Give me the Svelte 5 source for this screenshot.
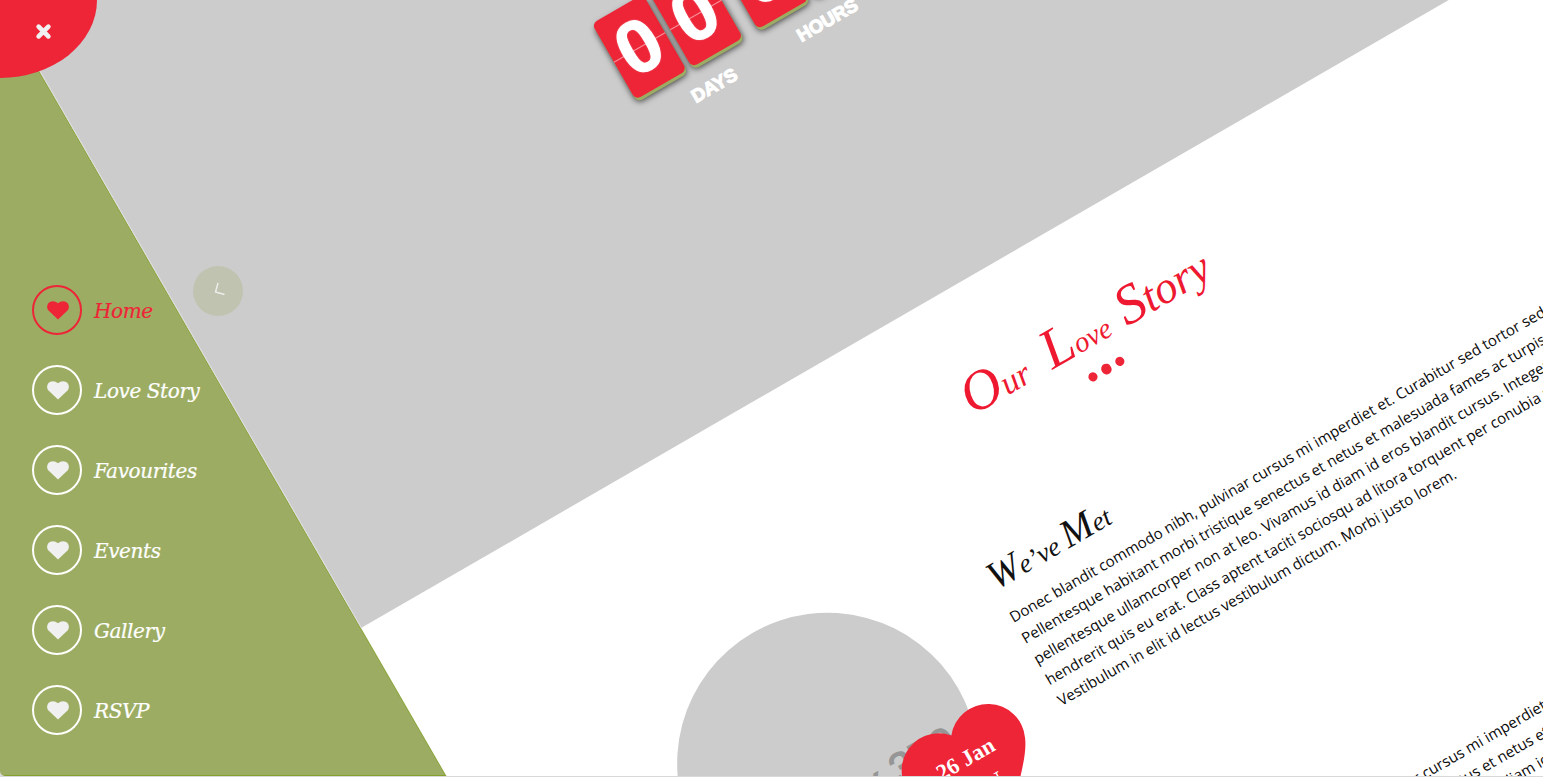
<script>
  const menu = ['Home', 'Love Story', 'Favourites', 'Events', 'Gallery', 'RSVP'];
  const units = [
    { label: 'DAYS', digits: ['0', '0'] },
    { label: 'HOURS', digits: ['0', '0'] }
  ];
  const story = [
    'Donec blandit commodo nibh, pulvinar cursus mi imperdiet et. Curabitur sed tortor sed',
    'Pellentesque habitant morbi tristique senectus et netus et malesuada fames ac turpis',
    'pellentesque ullamcorper non at leo. Vivamus id diam id eros blandit cursus. Integer',
    'hendrerit quis eu erat. Class aptent taciti sociosqu ad litora torquent per conubia nostra',
    'Vestibulum in elit id lectus vestibulum dictum. Morbi justo lorem.'
  ];
</script>

<div class="window">
  <nav>
    {#each menu as item, i}
      <a class:active={i === 0} href="#{item}">
        <span class="ring">
          <svg viewBox="0 0 22 19" width="22" height="19"><path d="M11 18.6 1.5 9.4C-.3 7.500-.3 4.200 1.300 2.200 3.500-.5 8.100-.5 11 2.200 13.900-.5 18.500-.5 20.700 2.200c1.600 2 1.600 5.300-.2 7.200Z" fill="currentColor" /></svg>
        </span>
        <span class="name">{item}</span>
      </a>
    {/each}
  </nav>

  <div class="page">
    <header>
      <div class="clock">
        {#each units as unit}
          <div class="unit">
            <div class="cards">
              {#each unit.digits as d}<div class="card">{d}</div>{/each}
            </div>
            <div class="label">{unit.label}</div>
          </div>
        {/each}
      </div>
    </header>
    <main>
      <h2><span class="our">Our</span><span class="love">Love</span><span class="story">Story</span></h2>
      <div class="dots"><i></i><i class="big"></i><i></i></div>
      {#each [0, 1] as n}
        <article>
          <div class="photo">
            <div class="disc"><span>370 x 370</span></div>
            <div class="date">
              <svg viewBox="0 0 136 136" width="133" height="134"><path d="M68 14A38 38 0 0 1 132 54C124 73 100 92 68 130 36 92 12 73 4.300 54A38 38 0 0 1 68 14Z" fill="#ee2437" /></svg>
              <div class="when">26 Jan<br />SUN</div>
            </div>
          </div>
          <div class="text">
            <h3><span>We’ve</span> <span>Met</span></h3>
            {#each story as line}<p>{line}</p>{/each}
          </div>
        </article>
      {/each}
    </main>
  </div>

  <button class="prev" aria-label="Previous">
    <svg viewBox="0 0 50 50" width="50" height="50"><path d="M25 17 22.500 26 31.500 28.500" fill="none" stroke="#eee" stroke-width="1.400" /></svg>
  </button>
  <button class="close" aria-label="Close">
    <svg viewBox="0 0 14 14" width="17" height="17"><path d="M3 3 11 11M11 3 3 11" stroke="#f1f1f1" stroke-width="3.900" stroke-linecap="round" /></svg>
  </button>
</div>

<style>
  :global(body) { margin: 0; background: #d9d9d9; overflow: hidden; }
  .window {
    position: relative;
    width: 1543px;
    height: 776px;
    overflow: hidden;
    background: linear-gradient(to top, #86a02c 1px, #9cad63 1px);
    border-bottom-left-radius: 5px;
  }
  nav {
    display: flex;
    flex-direction: column;
    gap: 30px;
    padding: 285px 0 0 32px;
    width: 200px;
  }
  nav a {
    display: flex;
    align-items: center;
    gap: 12px;
    height: 50px;
    color: #fff;
    text-decoration: none;
  }
  .ring {
    box-sizing: border-box;
    display: flex;
    flex: none;
    align-items: center;
    justify-content: center;
    width: 50px;
    height: 50px;
    padding: 1px 0 0 1px;
    border: 2px solid #fff;
    border-radius: 50%;
    color: #f0f0f0;
  }
  .name {
    padding-top: 1px;
    font: italic 20px/30px 'DejaVu Serif', serif;
    letter-spacing: -0.4px;
    white-space: nowrap;
    -webkit-text-stroke: 0.200px currentColor;
  }
  nav .active, .active .ring { color: #ee2437; border-color: #ee2437; }

  .page {
    position: absolute;
    left: 361px;
    top: -372px;
    width: 1552px;
    height: 2000px;
    background: #fff;
    box-shadow: -1px 0 0 #8ca53a;
    transform: rotate(-30deg);
    transform-origin: 0 1000px;
  }
  header {
    box-sizing: border-box;
    height: 1000px;
    padding: 591.500px 0 0 501px;
    background: #ccc;
    border-left: 1px solid #ddd;
  }
  .clock { display: flex; gap: 17.500px; }
  .cards { display: flex; gap: 5.500px; }
  .card {
    position: relative;
    width: 59px;
    height: 88px;
    border-radius: 6px;
    background: #ee2437;
    box-shadow: 0 3px 0 #9cad63, 0 4px 6px rgba(0, 0, 0, 0.75);
    color: #fff;
    font: bold 75px/86px 'Liberation Sans', Arial, sans-serif;
    text-align: center;
    text-shadow: 0 0 2px rgba(255, 255, 255, 0.7);
    -webkit-text-stroke: 1px #fff;
  }
  .card::after {
    content: '';
    position: absolute;
    left: 0;
    right: 0;
    top: 44px;
    height: 1px;
    background: rgba(255, 255, 255, 0.5);
  }
  .label {
    margin-top: 15px;
    color: #fff;
    font: bold 18.500px/24px 'Liberation Sans', Arial, sans-serif;
    text-align: center;
    -webkit-text-stroke: 1.200px #fff;
  }
  .unit:first-child .label { padding-left: 27px; }
  .unit:last-child .label { padding-left: 6px; }

  h2, h3 { margin: 0; font-family: 'Liberation Serif', 'Times New Roman', serif; font-style: italic; font-weight: normal; }
  h2 {
    display: flex;
    height: 71px;
    padding: 73px 0 0 636px;
    line-height: 60px;
    color: #ee1830;
  }
  h2 span, h3 span { display: inline-block; }
  h2 span::first-letter { font-size: 56px; line-height: 60px; }
  .our { width: 92px; font-size: 34px; }
  .love { width: 86px; font-size: 29px; }
  .story { font-size: 45px; }
  .dots { display: flex; justify-content: center; align-items: center; gap: 6px; width: 1550px; height: 9px; margin-bottom: 47px; }
  .dots i { width: 8.500px; height: 8.500px; border-radius: 50%; background: #ee2437; }
  .dots .big { width: 10.500px; height: 10.500px; }
  article { display: flex; gap: 82px; height: 300px; margin: 0 0 41px 185.500px; }
  .photo { position: relative; flex: none; width: 300px; height: 300px; }
  .disc {
    box-sizing: border-box;
    width: 301px;
    height: 301px;
    padding: 167px 0 0 88px;
    border-radius: 50%;
    background: #ccc;
    color: #969696;
    font: 42px/48px 'Liberation Sans', Arial, sans-serif;
    -webkit-text-stroke: 1.200px #969696;
    white-space: nowrap;
    overflow: hidden;
  }
  .date { position: absolute; left: 205px; top: 174px; width: 133px; height: 134px; }
  .date svg { display: block; }
  .when {
    position: absolute;
    left: 2px;
    right: 0;
    top: 25px;
    color: #fff;
    font: bold 22.500px/34px 'Liberation Serif', serif;
    text-align: center;
  }
  .text { padding-top: 48px; }
  h3 { font-size: 27px; line-height: 48px; height: 55.500px; padding-left: 1px; color: #111; }
  h3 span::first-letter { font-size: 39px; line-height: 48px; }
  p { margin: 0; font: 15.130px/24.200px 'Open Sans', 'Noto Sans', sans-serif; color: #0a0a0a; white-space: nowrap; }

  button { position: absolute; padding: 0; border: 0; }
  button svg { display: block; }
  .prev { left: 193px; top: 266px; width: 50px; height: 50px; border-radius: 50%; background: #c0c3af; }
  .close {
    display: flex;
    align-items: flex-start;
    left: 0;
    top: 0;
    width: 97px;
    height: 78px;
    padding: 22.500px 0 0 34.500px;
    box-sizing: border-box;
    border-radius: 0 0 100% 0;
    background: #ee2437;
  }
</style>
